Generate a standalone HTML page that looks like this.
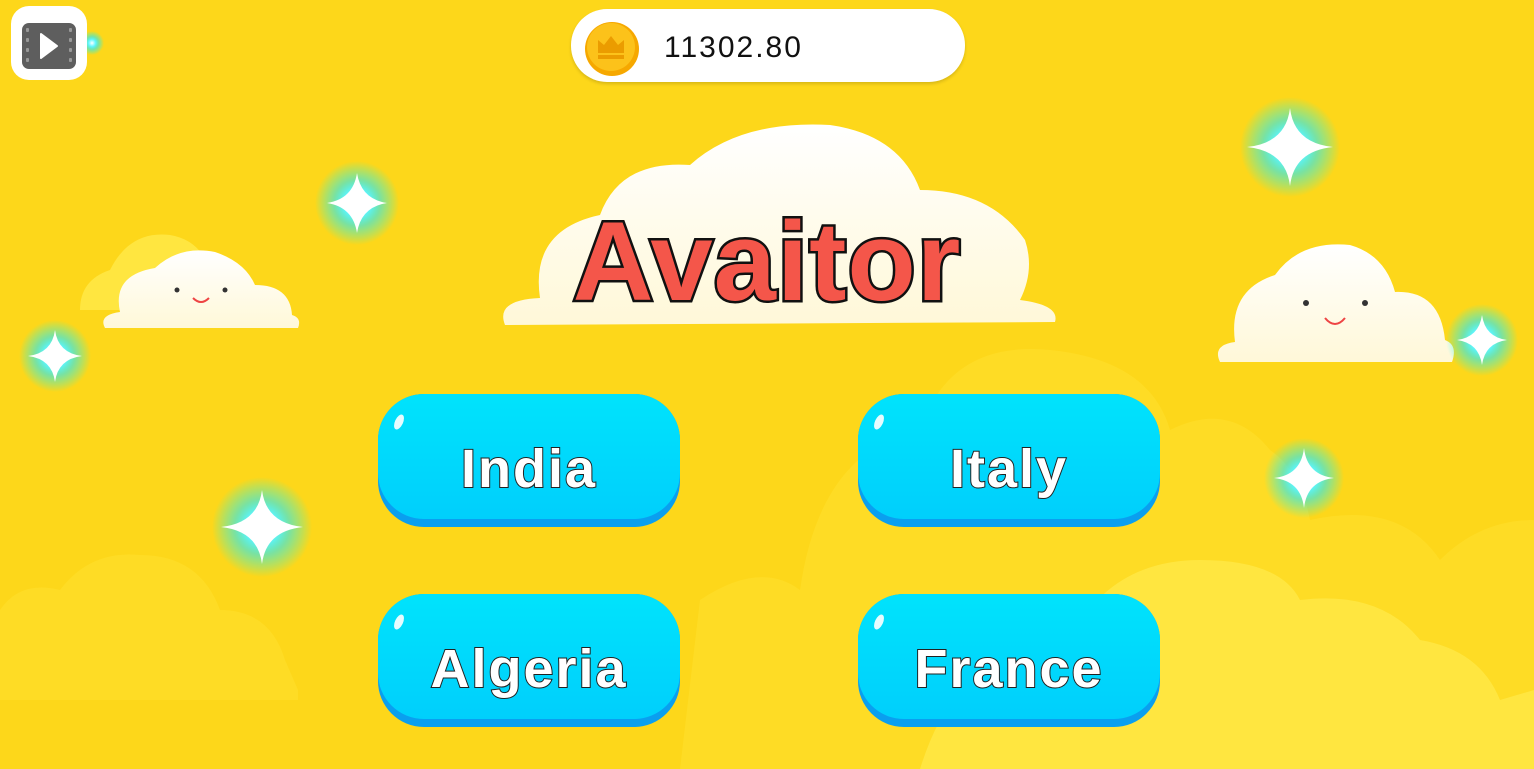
<!DOCTYPE html>
<html><head><meta charset="utf-8"><style>
html,body{margin:0;padding:0}
body{width:1534px;height:769px;overflow:hidden;background:#FDD71A;position:relative;font-family:"Liberation Sans",sans-serif}
.abs{position:absolute}
.btn{position:absolute;width:302px;height:133px;border-radius:46px;background:#0a9fef;}
.btn .top{position:absolute;left:0;top:0;right:0;bottom:8px;border-radius:46px;background:linear-gradient(#00e3fc,#00cffc);}
.btn .hl{position:absolute;left:17px;top:20px;width:8px;height:16px;border-radius:50%;background:#fff;transform:rotate(25deg);opacity:.9}
.btn span{position:absolute;left:0;right:0;top:44px;text-align:center;font-size:54px;font-weight:bold;color:#fff;-webkit-text-stroke:2px #222;paint-order:stroke fill;letter-spacing:2px}
</style></head><body>
<svg class="abs" style="left:0;top:0" width="1534" height="769">
<defs>
<radialGradient id="g"><stop offset="0" stop-color="#fff"/><stop offset=".3" stop-color="#5ff6ff"/><stop offset=".55" stop-color="#20eaff" stop-opacity=".6"/><stop offset="1" stop-color="#0ff" stop-opacity="0"/></radialGradient>
<linearGradient id="cl" x1="0" y1="0" x2="0" y2="1"><stop offset="0" stop-color="#fff"/><stop offset="1" stop-color="#fff8d8"/></linearGradient>
</defs>
<g fill="#FEDC25">
<path d="M0 700 L0 610 Q20 580 60 590 Q90 550 140 555 Q200 555 220 610 Q270 610 285 660 L298 690 L298 700 Z"/>
<path d="M680 769 L700 600 Q760 560 800 590 Q820 450 920 430 Q950 340 1050 350 Q1150 360 1170 430 Q1230 400 1270 450 Q1300 470 1310 520 Q1400 500 1440 560 Q1480 520 1534 520 L1534 769 Z"/>
</g>
<g fill="#FFE640">
<path d="M920 769 Q960 640 1060 660 Q1100 560 1200 560 Q1280 560 1300 600 Q1380 590 1420 640 Q1480 650 1500 700 L1534 690 L1534 769 Z"/>
<path d="M80 310 Q80 280 110 270 Q130 230 170 235 Q200 240 210 270 L210 310 Z"/>
</g>
<path d="M505 325 Q495 300 540 298 Q530 230 600 215 Q620 160 690 165 Q740 120 830 125 Q900 135 920 190 Q990 190 1025 240 Q1035 270 1020 300 Q1060 305 1055 322 Z" fill="url(#cl)"/>
<path d="M105 328 Q98 315 120 312 Q112 275 155 268 Q180 245 215 252 Q245 262 255 285 Q290 285 292 315 Q302 318 298 328 Z" fill="url(#cl)"/>
<circle cx="177" cy="290" r="2.5" fill="#333"/><circle cx="225" cy="290" r="2.5" fill="#333"/>
<path d="M193 298 Q201 306 209 298" stroke="#e44" stroke-width="2" fill="none"/>
<path d="M1220 362 Q1212 345 1235 342 Q1228 290 1275 275 Q1300 240 1350 245 Q1385 255 1395 292 Q1440 290 1445 340 Q1458 345 1452 362 Z" fill="url(#cl)"/>
<circle cx="1306" cy="303" r="3" fill="#333"/><circle cx="1365" cy="303" r="3" fill="#333"/>
<path d="M1325 318 Q1335 330 1345 318" stroke="#e44" stroke-width="2" fill="none"/>
<g>
<circle cx="357" cy="203" r="42" fill="url(#g)"/><path d="M357 173 Q361 199 387 203 Q361 207 357 233 Q353 207 327 203 Q353 199 357 173Z" fill="#fff"/>
<circle cx="55" cy="356" r="36" fill="url(#g)"/><path d="M55 330 Q58 353 82 356 Q58 359 55 382 Q52 359 28 356 Q52 353 55 330Z" fill="#fff"/>
<circle cx="262" cy="527" r="50" fill="url(#g)"/><path d="M262 490 Q266 523 303 527 Q266 531 262 564 Q258 531 221 527 Q258 523 262 490Z" fill="#fff"/>
<circle cx="1290" cy="147" r="50" fill="url(#g)"/><path d="M1290 108 Q1294 143 1333 147 Q1294 151 1290 186 Q1286 151 1247 147 Q1286 143 1290 108Z" fill="#fff"/>
<circle cx="1304" cy="478" r="40" fill="url(#g)"/><path d="M1304 448 Q1307 475 1334 478 Q1307 481 1304 508 Q1301 481 1274 478 Q1301 475 1304 448Z" fill="#fff"/>
<circle cx="1482" cy="340" r="36" fill="url(#g)"/><path d="M1482 315 Q1485 337 1507 340 Q1485 343 1482 365 Q1479 343 1457 340 Q1479 337 1482 315Z" fill="#fff"/>
<circle cx="92" cy="43" r="12" fill="url(#g)"/>
</g>
<text x="767" y="300" text-anchor="middle" font-family="Liberation Sans" font-weight="bold" font-size="112" fill="#F4564A" stroke="#111" stroke-width="5" paint-order="stroke" letter-spacing="1">Avaitor</text>
</svg>
<div class="abs" style="left:11px;top:6px;width:76px;height:74px;background:#fff;border-radius:18px"></div>
<div class="abs" style="left:22px;top:23px;width:54px;height:46px;background:#5e5e5e;border-radius:7px"></div>
<svg class="abs" style="left:22px;top:23px" width="54" height="46"><g fill="#999"><rect x="4" y="5" width="3" height="4" rx="1"/><rect x="4" y="15" width="3" height="4" rx="1"/><rect x="4" y="25" width="3" height="4" rx="1"/><rect x="4" y="35" width="3" height="4" rx="1"/><rect x="47" y="5" width="3" height="4" rx="1"/><rect x="47" y="15" width="3" height="4" rx="1"/><rect x="47" y="25" width="3" height="4" rx="1"/><rect x="47" y="35" width="3" height="4" rx="1"/></g><path d="M19 11 L35 23 L19 35 Z" fill="#fff" stroke="#fff" stroke-width="2" stroke-linejoin="round"/></svg>
<div class="abs" style="left:571px;top:9px;width:394px;height:73px;background:#fff;border-radius:36px;box-shadow:0 2px 3px rgba(0,0,0,.15)"></div>
<svg class="abs" style="left:584px;top:21px" width="56" height="56"><circle cx="28" cy="28" r="27" fill="#f6a800"/><circle cx="27" cy="26" r="24" fill="#fcc21a"/><path d="M14 32 L14 19 L20 24 L27 15 L34 24 L40 19 L40 32 Z" fill="#eb9c00"/><rect x="14" y="34" width="26" height="4" fill="#eb9c00"/></svg>
<div class="abs" style="left:664px;top:31px;font-size:30px;color:#111;letter-spacing:2px">11302.80</div>
<div class="btn" style="left:378px;top:394px"><div class="top"></div><div class="hl"></div><span>India</span></div>
<div class="btn" style="left:858px;top:394px"><div class="top"></div><div class="hl"></div><span>Italy</span></div>
<div class="btn" style="left:378px;top:594px"><div class="top"></div><div class="hl"></div><span>Algeria</span></div>
<div class="btn" style="left:858px;top:594px"><div class="top"></div><div class="hl"></div><span>France</span></div>
</body></html>
